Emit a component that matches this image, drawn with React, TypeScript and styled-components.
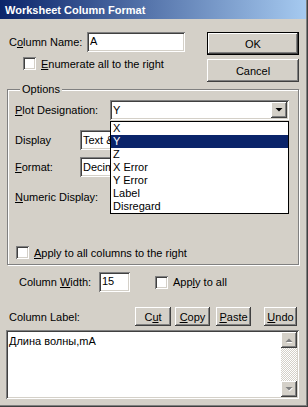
import React from "react";
import styled, { createGlobalStyle, css } from "styled-components";

const GlobalStyle = createGlobalStyle`
  html, body {
    margin: 0;
    padding: 0;
    background: #d4d0c8;
  }
  * {
    box-sizing: border-box;
  }
`;

const FACE = "#d4d0c8";
const SHADOW = "#808080";
const DARK = "#404040";
const NAVY = "#0a246a";

const raised = css`
  background: ${FACE};
  box-shadow: inset -1px -1px ${DARK}, inset 1px 1px #fff,
    inset -2px -2px ${SHADOW}, inset 2px 2px ${FACE};
`;

const sunken = css`
  background: #fff;
  box-shadow: inset 1px 1px ${SHADOW}, inset -1px -1px #fff,
    inset 2px 2px ${DARK}, inset -2px -2px ${FACE};
`;

const Window = styled.div`
  width: 308px;
  height: 407px;
  background: ${FACE};
  font-family: "Liberation Sans", Arial, sans-serif;
  font-size: 11px;
  color: #000;
  display: flex;
  flex-direction: column;
  box-shadow: inset -1px -1px ${DARK}, inset -2px -2px ${SHADOW};
  padding-right: 2px;
`;

const TitleBar = styled.div`
  height: 19px;
  flex: none;
  background: linear-gradient(to right, ${NAVY}, #a6caf0);
  color: #fff;
  font-weight: bold;
  font-size: 11px;
  display: flex;
  align-items: center;
  padding-left: 5px;
`;

const Body = styled.div`
  padding: 0 7px 0 6px;
  display: flex;
  flex-direction: column;
`;

const TopRow = styled.div`
  display: flex;
  justify-content: space-between;
  margin-top: 13px;
  height: 50px;
`;

const LeftCol = styled.div`
  display: flex;
  flex-direction: column;
`;

const Row = styled.div<{ $mt?: number; $ml?: number; $h?: number }>`
  display: flex;
  align-items: center;
  margin-top: ${(p) => p.$mt ?? 0}px;
  margin-left: ${(p) => p.$ml ?? 0}px;
  height: ${(p) => p.$h ?? 20}px;
  position: relative;
`;

const Label = styled.span<{ $w?: number }>`
  width: ${(p) => (p.$w ? `${p.$w}px` : "auto")};
  flex: none;
  white-space: nowrap;
`;

const TextInput = styled.div<{ $w: number; $h?: number }>`
  ${sunken};
  width: ${(p) => p.$w}px;
  height: ${(p) => p.$h ?? 20}px;
  padding: 3px 0 0 3px;
  line-height: 13px;
  flex: none;
`;

const ButtonCol = styled.div`
  display: flex;
  flex-direction: column;
  gap: 4px;
  width: 92px;
`;

const Button = styled.div<{ $w?: number; $h?: number; $default?: boolean }>`
  ${raised};
  width: ${(p) => (p.$w ? `${p.$w}px` : "100%")};
  height: ${(p) => p.$h ?? 23}px;
  display: flex;
  align-items: center;
  justify-content: center;
  flex: none;
  ${(p) =>
    p.$default &&
    css`
      box-shadow: inset 0 0 0 1px #000, inset -2px -2px ${DARK},
        inset 2px 2px #fff, inset -3px -3px ${SHADOW};
    `}
`;

const CheckBox = styled.span`
  ${sunken};
  width: 13px;
  height: 13px;
  flex: none;
  display: inline-block;
`;

const CheckRow = styled.label<{ $mt?: number; $ml?: number }>`
  display: flex;
  align-items: center;
  gap: 5px;
  margin-top: ${(p) => p.$mt ?? 0}px;
  margin-left: ${(p) => p.$ml ?? 0}px;
  height: 13px;
  white-space: nowrap;
`;

const Group = styled.fieldset`
  margin: 1px 0 0 1px;
  padding: 4px 9px 4px 7px;
  border: 1px solid ${SHADOW};
  box-shadow: inset 1px 1px #fff, 1px 1px #fff;
  min-width: 0;
  height: 182px;
  display: flex;
  flex-direction: column;
`;

const Legend = styled.legend`
  margin-left: 5px;
  padding: 0 2px;
  line-height: 13px;
  font-size: 11px;
  background: ${FACE};
  position: relative;
`;

const Combo = styled.div<{ $w?: number }>`
  ${sunken};
  height: 20px;
  ${(p) => (p.$w ? `width: ${p.$w}px;` : "flex: 1;")}
  display: flex;
  align-items: center;
  padding: 0 2px 0 3px;
  overflow: hidden;
  white-space: nowrap;
  position: relative;
`;

const ComboText = styled.span`
  flex: 1;
  overflow: hidden;
`;

const DropButton = styled.span`
  ${raised};
  width: 16px;
  height: 16px;
  flex: none;
  display: flex;
  align-items: center;
  justify-content: center;
`;

const DropList = styled.ul`
  position: absolute;
  top: 21px;
  left: 95px;
  width: 179px;
  margin: 0;
  padding: 0;
  list-style: none;
  background: #fff;
  border: 1px solid #000;
  z-index: 2;
`;

const DropItem = styled.li<{ $sel?: boolean }>`
  height: 13px;
  line-height: 13px;
  padding-left: 2px;
  background: ${(p) => (p.$sel ? NAVY : "#fff")};
  color: ${(p) => (p.$sel ? "#fff" : "#000")};
`;

const EditArea = styled.div`
  ${sunken};
  margin-top: 4px;
  height: 69px;
  display: flex;
  padding: 2px;
`;

const EditText = styled.div`
  flex: 1;
  padding: 3px 0 0 1px;
`;

const ScrollBar = styled.div`
  width: 16px;
  display: flex;
  flex-direction: column;
  background: repeating-conic-gradient(#fff 0 25%, ${FACE} 0 50%) 0 0 / 2px
    2px;
`;

const ScrollTrack = styled.div`
  flex: 1;
`;

const ScrollButton = styled.span`
  ${raised};
  width: 16px;
  height: 16px;
  display: flex;
  align-items: center;
  justify-content: center;
`;

const LabelButtons = styled.div`
  display: flex;
  margin-left: auto;
`;

const Arrow = ({ up, disabled }: { up?: boolean; disabled?: boolean }) => (
  <svg width="8" height="5" viewBox="0 0 8 5">
    {disabled && (
      <polygon
        points={up ? "1.5,5 4.5,2 7.5,5" : "1.5,1 8,1 4.5,4.5"}
        fill="#fff"
      />
    )}
    <polygon
      points={up ? "0.5,4 4,0.5 7.5,4" : "0.5,0 7.5,0 4,3.5"}
      fill={disabled ? SHADOW : "#000"}
    />
  </svg>
);

const designations = ["X", "Y", "Z", "X Error", "Y Error", "Label", "Disregard"];

export default function App(): JSX.Element {
  return (
    <Window>
      <GlobalStyle />
      <TitleBar>Worksheet Column Format</TitleBar>
      <Body>
        <TopRow>
          <LeftCol>
            <Row $ml={3}>
              <Label $w={78}>
                C<u>o</u>lumn Name:
              </Label>
              <TextInput $w={98}>A</TextInput>
            </Row>
            <CheckRow $mt={5} $ml={17}>
              <CheckBox />
              <span>
                <u>E</u>numerate all to the right
              </span>
            </CheckRow>
          </LeftCol>
          <ButtonCol>
            <Button $default>OK</Button>
            <Button>Cancel</Button>
          </ButtonCol>
        </TopRow>

        <Group>
          <Legend>Options</Legend>
          <Row>
            <Label $w={95}>
              <u>P</u>lot Designation:
            </Label>
            <Combo>
              <ComboText>Y</ComboText>
              <DropButton>
                <Arrow />
              </DropButton>
            </Combo>
            <DropList>
              {designations.map((d) => (
                <DropItem key={d} $sel={d === "Y"}>
                  {d}
                </DropItem>
              ))}
            </DropList>
          </Row>
          <Row $mt={10}>
            <Label $w={65}>Display</Label>
            <Combo $w={120}>
              <ComboText>Text &amp; Numeric</ComboText>
            </Combo>
          </Row>
          <Row $mt={7}>
            <Label $w={65}>
              <u>F</u>ormat:
            </Label>
            <Combo $w={120}>
              <ComboText>Decimal:1000</ComboText>
            </Combo>
          </Row>
          <Row $mt={10}>
            <Label>
              <u>N</u>umeric Display:
            </Label>
          </Row>
          <CheckRow $mt={39} $ml={1}>
            <CheckBox />
            <span>
              <u>A</u>pply to all columns to the right
            </span>
          </CheckRow>
        </Group>

        <Row $mt={7} $ml={13}>
          <Label $w={80}>
            Column <u>W</u>idth:
          </Label>
          <TextInput $w={31}>15</TextInput>
          <CheckRow $ml={25}>
            <CheckBox />
            <span>
              App<u>l</u>y to all
            </span>
          </CheckRow>
        </Row>

        <Row $mt={15} $ml={3} $h={19}>
          <Label>Column Label:</Label>
          <LabelButtons>
            <Button $w={36} $h={19}>
              C<u>u</u>t
            </Button>
            <Button $w={35} $h={19} style={{ marginLeft: 4 }}>
              <u>C</u>opy
            </Button>
            <Button $w={35} $h={19} style={{ marginLeft: 6 }}>
              <u>P</u>aste
            </Button>
            <Button $w={33} $h={19} style={{ marginLeft: 13, marginRight: 2 }}>
              <u>U</u>ndo
            </Button>
          </LabelButtons>
        </Row>

        <EditArea>
          <EditText>Длина волны,mA</EditText>
          <ScrollBar>
            <ScrollButton>
              <Arrow up disabled />
            </ScrollButton>
            <ScrollTrack />
            <ScrollButton>
              <Arrow disabled />
            </ScrollButton>
          </ScrollBar>
        </EditArea>
      </Body>
    </Window>
  );
}
